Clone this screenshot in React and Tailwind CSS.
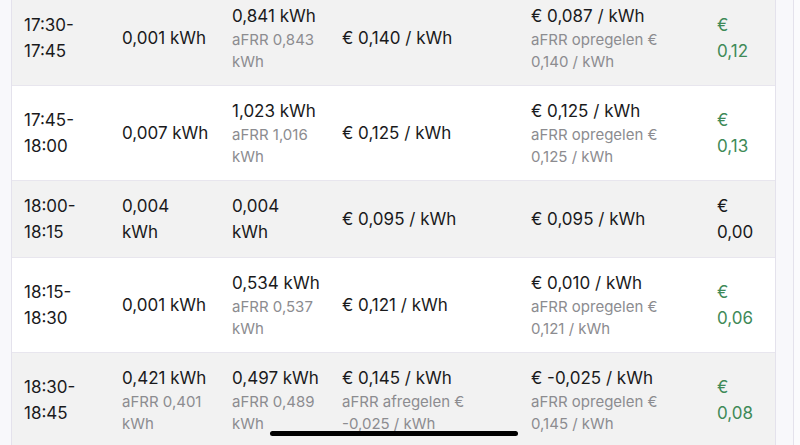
import React from 'react';

const rows = [
  {
    time: ['17:30-', '17:45'],
    used: { main: ['0,001 kWh'] },
    fed: { main: ['0,841 kWh'], sub: ['aFRR 0,843', 'kWh'] },
    buy: { main: ['€ 0,140 / kWh'] },
    sell: { main: ['€ 0,087 / kWh'], sub: ['aFRR opregelen €', '0,140 / kWh'] },
    total: ['€', '0,12'],
    green: true,
  },
  {
    time: ['17:45-', '18:00'],
    used: { main: ['0,007 kWh'] },
    fed: { main: ['1,023 kWh'], sub: ['aFRR 1,016', 'kWh'] },
    buy: { main: ['€ 0,125 / kWh'] },
    sell: { main: ['€ 0,125 / kWh'], sub: ['aFRR opregelen €', '0,125 / kWh'] },
    total: ['€', '0,13'],
    green: true,
  },
  {
    time: ['18:00-', '18:15'],
    used: { main: ['0,004', 'kWh'] },
    fed: { main: ['0,004', 'kWh'] },
    buy: { main: ['€ 0,095 / kWh'] },
    sell: { main: ['€ 0,095 / kWh'] },
    total: ['€', '0,00'],
    green: false,
  },
  {
    time: ['18:15-', '18:30'],
    used: { main: ['0,001 kWh'] },
    fed: { main: ['0,534 kWh'], sub: ['aFRR 0,537', 'kWh'] },
    buy: { main: ['€ 0,121 / kWh'] },
    sell: { main: ['€ 0,010 / kWh'], sub: ['aFRR opregelen €', '0,121 / kWh'] },
    total: ['€', '0,06'],
    green: true,
  },
  {
    time: ['18:30-', '18:45'],
    used: { main: ['0,421 kWh'], sub: ['aFRR 0,401', 'kWh'] },
    fed: { main: ['0,497 kWh'], sub: ['aFRR 0,489', 'kWh'] },
    buy: { main: ['€ 0,145 / kWh'], sub: ['aFRR afregelen €', '-0,025 / kWh'] },
    sell: { main: ['€ -0,025 / kWh'], sub: ['aFRR opregelen €', '0,145 / kWh'] },
    total: ['€', '0,08'],
    green: true,
  },
];

const Cell = ({ data }) => (
  <div className="px-3">
    {data.main.map((t, i) => (
      <div key={i} className="text-[17px] leading-[26px] text-[#1a1a1c] whitespace-nowrap">{t}</div>
    ))}
    {data.sub &&
      data.sub.map((t, i) => (
        <div key={i} className="text-[15px] leading-[22px] text-[#8c8c90] whitespace-nowrap">{t}</div>
      ))}
  </div>
);

export default function App() {
  return (
    <div
      className="relative w-[800px] h-[445px] overflow-hidden bg-white flex"
      style={{ fontFamily: 'Inter, "Liberation Sans", sans-serif' }}
    >
      <div className="w-[12px] bg-[#f8f8fb] border-r border-[#e4e2ec]"></div>
      <div className="w-[763px] -mt-[9px]">
        {rows.map((r, i) => (
          <div
            key={i}
            className={`grid grid-cols-[98px_110px_110px_189px_186px_1fr] items-center py-3 border-b border-[#e8e6ee] ${
              i % 2 === 0 ? 'bg-[#f2f2f2]' : 'bg-white'
            }`}
          >
            <Cell data={{ main: r.time }} />
            <Cell data={r.used} />
            <Cell data={r.fed} />
            <Cell data={r.buy} />
            <Cell data={r.sell} />
            <div className="px-3">
              {r.total.map((t, j) => (
                <div
                  key={j}
                  className={`text-[17px] leading-[26px] ${r.green ? 'text-[#3f8a58]' : 'text-[#1a1a1c]'}`}
                >
                  {t}
                </div>
              ))}
            </div>
          </div>
        ))}
      </div>
      <div className="w-[19px] bg-[#f8f8fb] border-l border-r border-[#e4e2ec]"></div>
      <div className="flex-1 bg-[#fbfbfd]"></div>
      <div className="absolute left-[270px] top-[431px] w-[248px] h-[5px] rounded-full bg-black"></div>
    </div>
  );
}
